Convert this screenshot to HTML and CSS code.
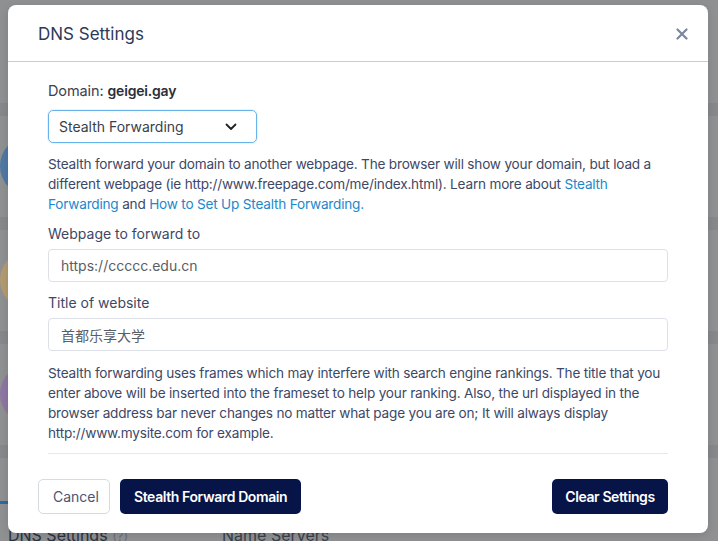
FILE: index.html
```html
<!DOCTYPE html>
<html lang="en">
<head>
<meta charset="utf-8">
<title>DNS Settings</title>
<link rel="stylesheet" href="styles.css">
</head>
<body>
<div class="page">
  <div class="gap g1"></div>
  <div class="band"></div>
  <div class="row"><span class="dot blue"></span></div>
  <div class="band"></div>
  <div class="row"><span class="dot orange"></span></div>
  <div class="band"></div>
  <div class="row"><span class="dot purple"></span></div>
  <div class="band"></div>
  <div class="row short"></div>
  <div class="tabline"></div>
  <div class="bottom-row">
    <span class="bt-left">DNS Settings <span class="q">(?)</span></span>
    <span class="bt-right">Name Servers</span>
  </div>
</div>

<div class="modal">
  <div class="modal-header">
    <h2 class="modal-title">DNS Settings</h2>
    <button class="close" aria-label="Close">
      <svg width="12" height="12" viewBox="0 0 12 12"><path d="M1.5 1.5 L10.5 10.5 M10.5 1.5 L1.5 10.5" stroke="#7c869e" stroke-width="2.2" stroke-linecap="round"/></svg>
    </button>
  </div>
  <div class="modal-body">
    <div class="domain">Domain: <strong>geigei.gay</strong></div>
    <div class="select">
      <span>Stealth Forwarding</span>
      <svg width="12" height="8" viewBox="0 0 12 8"><path d="M1.5 1.5 L6 6 L10.5 1.5" fill="none" stroke="#222" stroke-width="1.8" stroke-linecap="round" stroke-linejoin="round"/></svg>
    </div>
    <p class="desc">Stealth forward your domain to another webpage. The browser will show your domain, but load a different webpage (ie http://www.freepage.com/me/index.html). Learn more about <a href="#">Stealth Forwarding</a> and <a href="#">How to Set Up Stealth Forwarding.</a></p>
    <label class="label">Webpage to forward to</label>
    <div class="input">https://ccccc.edu.cn</div>
    <label class="label">Title of website</label>
    <div class="input cjk">首都乐享大学</div>
    <p class="desc note">Stealth forwarding uses frames which may interfere with search engine rankings. The title that you enter above will be inserted into the frameset to help your ranking. Also, the url displayed in the browser address bar never changes no matter what page you are on; It will always display http://www.mysite.com for example.</p>
    <div class="sep"></div>
  </div>
  <div class="modal-footer">
    <button class="btn btn-light">Cancel</button>
    <button class="btn btn-dark">Stealth Forward Domain</button>
    <button class="btn btn-dark push">Clear Settings</button>
  </div>
</div>
</body>
</html>
```

FILE: styles.css
```css
* { box-sizing: border-box; }
html, body { margin: 0; padding: 0; }
body {
  width: 718px;
  height: 541px;
  overflow: hidden;
  background: #8f9092;
  font-family: Inter, "Noto Sans", "Noto Sans CJK SC", sans-serif;
  position: relative;
}

/* dimmed page behind the dialog */
.page { display: flex; flex-direction: column; }
.gap.g1 { height: 103px; }
.band { height: 13px; background: #86888b; }
.row { height: 101px; display: flex; align-items: flex-start; }
.row.short { height: 43px; }
.dot { width: 60px; height: 60px; border-radius: 50%; margin-top: 20px; margin-left: 0; }
.dot.blue { background: #4f79a3; }
.dot.orange { background: #b39a70; }
.dot.purple { background: #8e77a2; }
.tabline { height: 3px; background: #2b6aa4; width: 120px; }
.bottom-row {
  display: flex;
  padding: 21px 0 0 8px;
  font-size: 16px;
  color: #2c3240;
  line-height: 20px;
}
.bt-left { width: 214px; }
.q { font-size: 13px; color: #6b6f78; }
.bt-right { color: #3a404c; }

/* dialog */
.modal {
  position: absolute;
  left: 8px;
  top: 5px;
  width: 700px;
  height: 528px;
  background: #fff;
  border-radius: 8px;
  box-shadow: 0 2px 8px rgba(0,0,0,0.12);
  display: flex;
  flex-direction: column;
}
.modal-header {
  height: 57px;
  border-bottom: 1px solid #c8ccd6;
  display: flex;
  align-items: center;
  justify-content: space-between;
  padding: 1px 20px 0 30px;
}
.modal-title {
  margin: 0;
  font-size: 17px;
  font-weight: 400;
  color: #2e3a56;
  letter-spacing: 0;
}
.close {
  border: 0;
  background: none;
  padding: 0;
  width: 12px;
  height: 12px;
  display: flex;
  margin-top: 1px;
}

.modal-body {
  padding: 19px 40px 0;
  display: flex;
  flex-direction: column;
  color: #3d4766;
  font-size: 14px;
}
.domain {
  font-size: 14.5px;
  line-height: 20px;
  color: #3a4152;
  letter-spacing: -0.1px;
}
.domain strong { font-weight: 600; font-size: 14px; color: #2b2f3a; letter-spacing: -0.2px; }
.select {
  margin-top: 9px;
  width: 209px;
  height: 33px;
  border: 1px solid #67b3ec;
  border-radius: 5px;
  display: flex;
  align-items: center;
  justify-content: space-between;
  padding: 0 19px 0 10px;
  font-size: 14px;
  color: #3a3f4a;
  box-shadow: 0 0 0 1px rgba(103,179,236,0.15);
}
.desc {
  margin: 11px 0 0;
  line-height: 20px;
  font-size: 13.6px;
  letter-spacing: -0.2px;
  color: #3d4766;
}
.desc a { color: #1b88cc; text-decoration: none; }
.label {
  margin-top: 10px;
  line-height: 20px;
  font-size: 14px;
  color: #3d4766;
}
.label + .input { margin-top: 5px; }
.input {
  height: 33px;
  border: 1px solid #dde1e7;
  border-radius: 4px;
  display: flex;
  align-items: center;
  padding: 0 12px;
  font-size: 14px;
  color: #5a5e66;
}
.input + .label { margin-top: 11px; }
.input.cjk { font-family: Inter, "Noto Sans CJK SC", sans-serif; }
.desc.note { margin-top: 12px; }
.sep {
  margin-top: 10px;
  height: 1px;
  background: #e4e7ec;
}

.modal-footer {
  display: flex;
  gap: 10px;
  padding: 25px 40px 0 30px;
}
.btn {
  height: 35px;
  border-radius: 5px;
  font-family: Inter, "Noto Sans", sans-serif;
  font-size: 14px;
  padding: 0 14px;
  white-space: nowrap;
  cursor: pointer;
}
.btn-light {
  background: #fff;
  border: 1px solid #d6dae2;
  color: #4b5571;
  width: 72px;
}
.btn-dark {
  background: #061447;
  border: 0;
  color: #fff;
  font-weight: 600;
  letter-spacing: -0.4px;
  width: 181px;
}
.push { margin-left: auto; width: 116px; padding: 0; }
```
